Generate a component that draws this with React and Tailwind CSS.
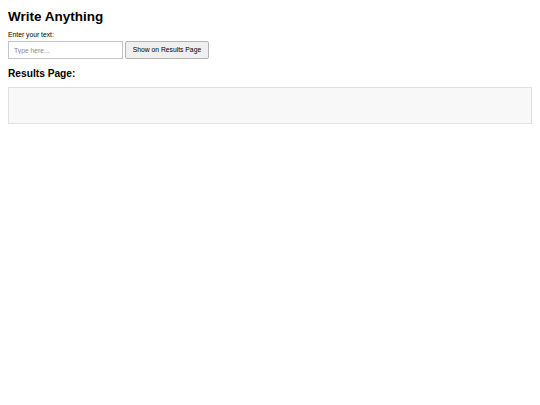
export default function App() {
  return (
    <div className="min-h-[405px] bg-white p-[8px] text-black" style={{ fontFamily: '"Liberation Sans", Arial, sans-serif' }}>
      <h1 className="text-[13.5px] font-bold leading-none mt-[2px] mb-[8px]">Write Anything</h1>
      <label className="block text-[6.75px] leading-none mb-[3px]">Enter your text:</label>
      <div className="flex items-center gap-[2px]">
        <input
          type="text"
          placeholder="Type here..."
          className="w-[115px] h-[18px] border border-[#c4c4c4] bg-white px-[5px] text-[6.75px] outline-none placeholder:text-[#888]"
        />
        <button className="h-[18px] w-[84px] rounded-[2px] border border-[#b4b4b4] bg-[#efefef] text-[6.75px] text-black">
          Show on Results Page
        </button>
      </div>
      <h2 className="text-[10.2px] font-bold leading-none mt-[10px] mb-[8px]">Results Page:</h2>
      <div className="h-[37px] w-full border border-[#e0e0e0] bg-[#f8f8f8]"></div>
    </div>
  );
}
